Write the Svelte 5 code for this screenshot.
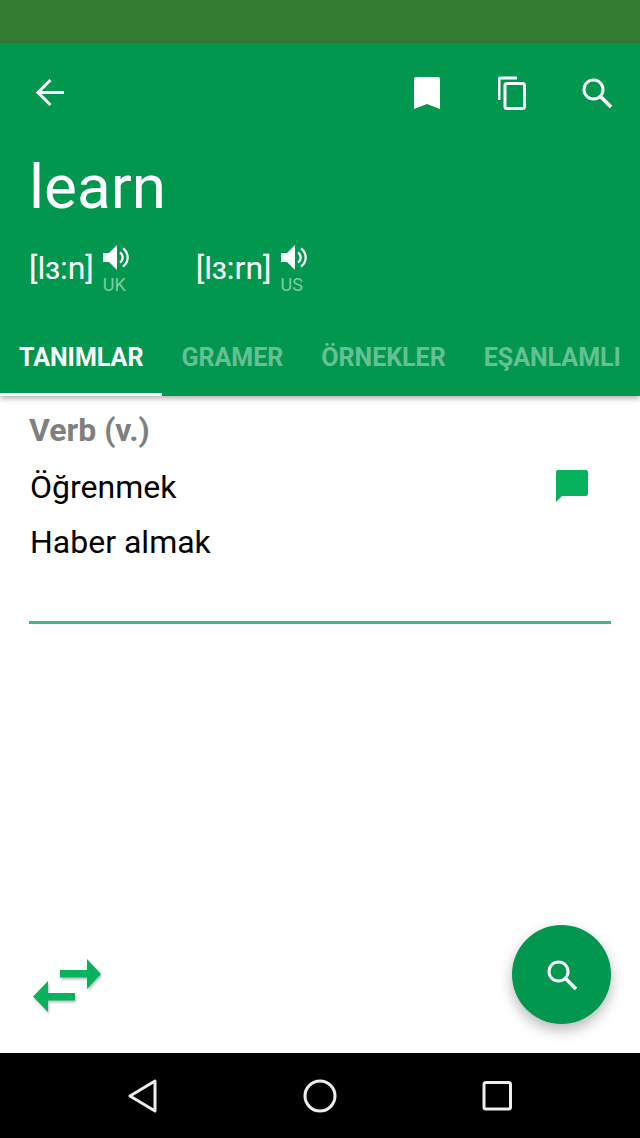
<script>
    const tabs = ["TANIMLAR", "GRAMER", "ÖRNEKLER", "EŞANLAMLI"];
    const prons = [
        { text: "[lɜ:n]", label: "UK" },
        { text: "[lɜ:rn]", label: "US" }
    ];
    const meanings = ["Öğrenmek", "Haber almak"];
</script>

<div class="page">
    <div class="status"></div>

    <header class="head">
        <div class="toolbar">
            <svg viewBox="0 0 32 32" width="32" height="32">
                <path d="M31 15.500H5M17.500 3 5 15.500 17.500 28" fill="none" stroke="#fff" stroke-width="3" />
            </svg>
            <div class="actions">
                <svg class="mark" viewBox="0 0 28 34" width="28" height="34">
                    <path d="M3 1h22a2 2 0 0 1 2 2v30l-13-5-13 5V3a2 2 0 0 1 2-2z" fill="#fff" />
                </svg>
                <svg viewBox="1 0 28 34" width="28" height="34">
                    <path d="M20 2H4a2 2 0 0 0-2 2v20" fill="none" stroke="#fff" stroke-width="3" />
                    <rect x="8" y="7.500" width="19.500" height="25" rx="2" fill="none" stroke="#fff" stroke-width="3" />
                </svg>
                <svg viewBox="0 0 32 32" width="32" height="32">
                    <circle cx="12.500" cy="12.500" r="9.500" fill="none" stroke="#fff" stroke-width="3" />
                    <path d="M19.500 19.500 30 30" stroke="#fff" stroke-width="3.500" />
                </svg>
            </div>
        </div>

        <h1 class="word">learn</h1>

        <div class="prons">
            {#each prons as p}
                <div class="pron">
                    <span class="ipa">{p.text}</span>
                    <div class="speaker">
                        <svg viewBox="0 0 28 26" width="28" height="26">
                            <path d="M0 8h6l8-8v25l-8-8H0z" fill="#fff" />
                            <path d="M17 7.500a6 6 0 0 1 0 10M20 3.500a11 11 0 0 1 0 18" fill="none" stroke="#fff" stroke-width="2.200" />
                        </svg>
                        <span class="accent">{p.label}</span>
                    </div>
                </div>
            {/each}
        </div>

        <nav class="tabs">
            {#each tabs as tab, i}
                <div class="tab" class:active={i === 0}>{tab}</div>
            {/each}
        </nav>
    </header>

    <main class="content">
        <div class="pos">Verb (v.)</div>
        <div class="meanings">
            <div class="meaning">
                <span>{meanings[0]}</span>
                <svg viewBox="0 0 32 32" width="32" height="32">
                    <path d="M2 0h28a2 2 0 0 1 2 2v22a2 2 0 0 1-2 2H6l-6 6V2a2 2 0 0 1 2-2z" fill="#06b35c" />
                </svg>
            </div>
            <div class="meaning">{meanings[1]}</div>
        </div>
        <hr class="rule" />

        <div class="bottom">
            <svg class="swap" viewBox="0 0 72 58" width="72" height="58">
                <g fill="#06b35c" class="arrows">
                    <path d="M27 11h27V0l14 15-14 15V18.500H27z" />
                    <path d="M42 34H15V22L0 37.500 15 53V41.500h27z" />
                </g>
            </svg>
            <button class="fab" aria-label="Ara">
                <svg viewBox="0 0 32 32" width="32" height="32">
                    <circle cx="12.500" cy="12.500" r="9.500" fill="none" stroke="#fff" stroke-width="3" />
                    <path d="M19.500 19.500 30 30" stroke="#fff" stroke-width="3.500" />
                </svg>
            </button>
        </div>
    </main>

    <footer class="navbar">
        <svg viewBox="0 0 30 34" width="30" height="34">
            <path d="M27 2v30L2 17z" fill="none" stroke="#eee" stroke-width="3" stroke-linejoin="round" />
        </svg>
        <svg viewBox="0 0 34 34" width="34" height="34">
            <circle cx="17" cy="17" r="15" fill="none" stroke="#eee" stroke-width="3" />
        </svg>
        <svg viewBox="0 0 30 30" width="30" height="30">
            <rect x="2" y="1.500" width="26.500" height="26.500" rx="2" fill="none" stroke="#eee" stroke-width="3" />
        </svg>
    </footer>
</div>

<style>
    :global(body) {
        margin: 0;
        font-family: Roboto, sans-serif;
        background: #fff;
    }

    .page {
        width: 640px;
        height: 1138px;
        display: flex;
        flex-direction: column;
        overflow: hidden;
    }

    .status {
        height: 43px;
        background: #357c33;
    }

    .head {
        height: 353px;
        box-sizing: border-box;
        background: #01974e;
        color: #fff;
        box-shadow: 0 2px 6px rgba(0, 0, 0, 0.35);
        display: flex;
        flex-direction: column;
        position: relative;
        z-index: 1;
    }

    .toolbar {
        display: flex;
        justify-content: space-between;
        align-items: center;
        height: 34px;
        padding: 33px 27px 0 33px;
    }

    .actions {
        display: flex;
        align-items: center;
        gap: 55px;
    }

    .mark {
        margin-right: 2px;
    }

    .word {
        margin: 0;
        padding: 39px 0 0 29px;
        font-size: 62px;
        font-weight: 400;
        line-height: 76px;
    }

    .prons {
        display: flex;
        gap: 65px;
        padding: 20px 0 0 29px;
    }

    .pron {
        display: flex;
        align-items: flex-start;
        gap: 9px;
    }

    .ipa {
        font-size: 32px;
        line-height: 40px;
        margin-top: 3px;
    }

    .speaker {
        display: flex;
        flex-direction: column;
    }

    .accent {
        font-size: 18px;
        line-height: 20px;
        color: #80cba6;
        margin-top: 4px;
    }

    .tabs {
        display: flex;
        margin-top: auto;
        height: 72px;
    }

    .tab {
        box-sizing: border-box;
        height: 72px;
        padding: 18px 19px 0;
        font-size: 25px;
        font-weight: 700;
        line-height: 32px;
        color: #66c095;
        white-space: nowrap;
    }

    .tab.active {
        color: #fff;
        border-bottom: 3px solid #fff;
    }

    .content {
        flex: 1;
        display: flex;
        flex-direction: column;
        padding: 14px 29px 0;
    }

    .pos {
        font-size: 32px;
        font-weight: 700;
        line-height: 40px;
        color: #7f7f7f;
    }

    .meanings {
        margin-top: 10px;
    }

    .meaning {
        display: flex;
        justify-content: space-between;
        align-items: center;
        font-size: 32px;
        line-height: 55px;
        color: #000;
        padding: 0 23px 0 1px;
    }

    .meaning svg {
        margin-top: -4px;
    }

    .rule {
        width: 100%;
        border: 0;
        height: 3px;
        background: #3dbb82;
        margin: 51px 0 0;
    }

    .bottom {
        margin-top: auto;
        display: flex;
        justify-content: space-between;
        align-items: flex-end;
        padding: 0 0 29px 4px;
    }

    .swap {
        margin-bottom: 7px;
    }

    .arrows {
        filter: drop-shadow(1px 2px 1px rgba(0, 0, 0, 0.25));
    }

    .fab {
        width: 99px;
        height: 99px;
        padding: 0;
        border: 0;
        border-radius: 50%;
        background: #01974e;
        box-shadow: 0 6px 14px rgba(0, 0, 0, 0.28);
        display: flex;
        align-items: center;
        justify-content: center;
    }

    .navbar {
        height: 85px;
        background: #000;
        display: flex;
        align-items: center;
        justify-content: space-between;
        padding: 0 128px;
    }
</style>
